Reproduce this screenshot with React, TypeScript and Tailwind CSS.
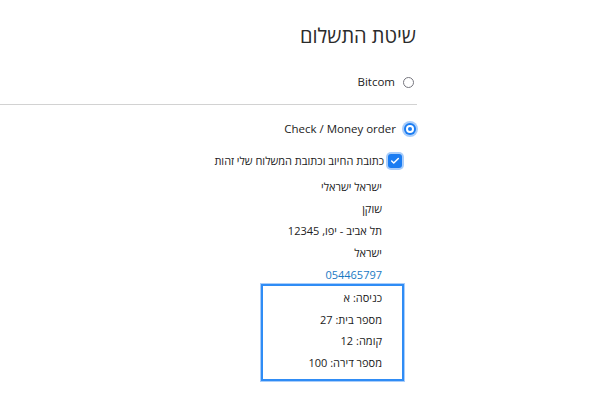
import { Check } from 'lucide-react';

const font = { fontFamily: '"Open Sans", "Liberation Sans", "DejaVu Sans", sans-serif' };

function Radio({ checked }: { checked?: boolean }) {
  return checked ? (
    <span className="flex h-[12px] w-[12px] items-center justify-center rounded-full bg-[#1a7cf2] ring-2 ring-[#a9cdfa]">
      <span className="flex h-[8px] w-[8px] items-center justify-center rounded-full bg-white">
        <span className="h-[4px] w-[4px] rounded-full bg-[#1a7cf2]" />
      </span>
    </span>
  ) : (
    <span className="h-[11px] w-[11px] rounded-full border-[1.5px] border-[#76767e] bg-white" />
  );
}

const address = ['ישראל ישראלי', 'שוקן', 'תל אביב - יפו, 12345', 'ישראל'];
const extra = ['כניסה: א', 'מספר בית: 27', 'קומה: 12', 'מספר דירה: 100'];

export default function App() {
  return (
    <div className="min-h-[400px] w-[600px] bg-white text-[#222]" style={font}>
      <div dir="rtl" className="w-[417px] pt-[22px]">
        <h2 className="mr-[1px] text-[20px] leading-[28px] font-normal text-[#2b2b2b]">שיטת התשלום</h2>

        <label className="mt-[22px] mr-[3px] flex items-center gap-[8px] text-[11.5px] leading-[20px]">
          <Radio />
          <span>Bitcom</span>
        </label>

        <div className="mt-[12px] h-px w-full bg-[#d2d2d2]" />

        <label className="mt-[14px] mr-[1px] flex items-center gap-[8px] text-[11.5px] leading-[20px]">
          <Radio checked />
          <span>Check / Money order</span>
        </label>

        <label className="mt-[12px] mr-[15px] flex items-center gap-[4px] text-[11px] leading-[20px]">
          <span className="flex h-[14px] w-[14px] items-center justify-center rounded-[3px] bg-[#1a7cf2] ring-2 ring-[#a9cdfa]">
            <Check size={10} strokeWidth={3.5} className="text-white" />
          </span>
          <span>כתובת החיוב וכתובת המשלוח שלי זהות</span>
        </label>

        <div className="mt-[5px] mr-[35px] flex flex-col text-[11px] leading-[22px]">
          {address.map((line) => (
            <div key={line}>{line}</div>
          ))}
          <a className="text-[#1979c3]">054465797</a>
        </div>

        <div className="-mt-[2px] mr-[13px] flex w-[143px] flex-col border-2 border-[#2f8cf5] pt-[1px] pr-[20px] pb-[6px] text-[11px] leading-[21.5px] shadow-[0_0_0_1px_#a9cdfa]">
          {extra.map((line) => (
            <div key={line}>{line}</div>
          ))}
        </div>
      </div>
    </div>
  );
}
